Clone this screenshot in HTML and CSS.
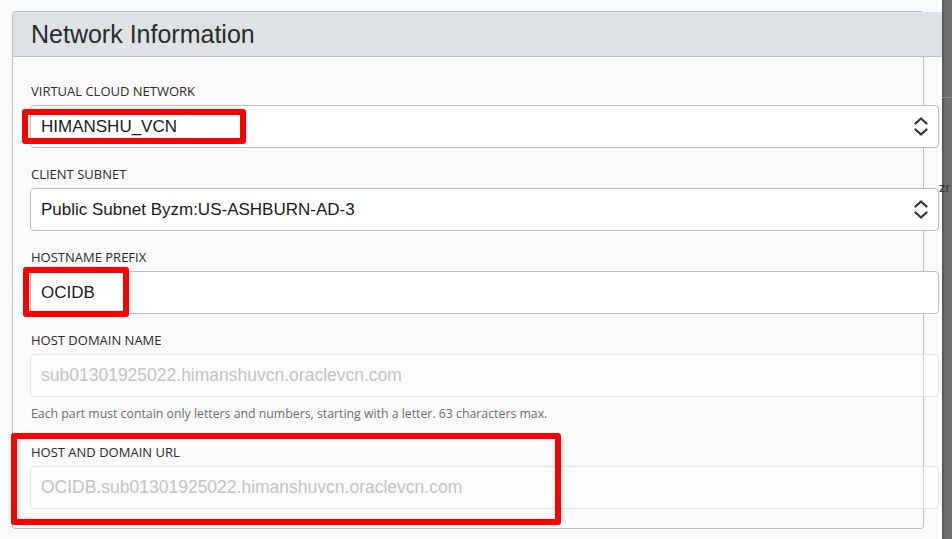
FILE: index.html
```html
<!DOCTYPE html>
<html lang="en">
<head>
<meta charset="utf-8">
<title>Network Information</title>
<link rel="stylesheet" href="styles.css">
</head>
<body>
<div class="page">
  <div class="main">
    <section class="panel">
      <header class="panel-head"><h2 class="panel-title">Network Information</h2></header>
      <div class="panel-body">
        <div class="field">
          <div class="label">VIRTUAL CLOUD NETWORK</div>
          <div class="control">
            <span class="value">HIMANSHU_VCN</span>
            <svg class="chev" width="16" height="22" viewBox="0 0 16 22"><path d="M2.5 7.5 L8 2.5 L13.5 7.5 M2.5 13.5 L8 18.5 L13.5 13.5" fill="none" stroke="#333" stroke-width="2.2" stroke-linecap="round" stroke-linejoin="round"/></svg>
          </div>
        </div>
        <div class="field">
          <div class="label">CLIENT SUBNET</div>
          <div class="control">
            <span class="value">Public Subnet Byzm:US-ASHBURN-AD-3</span>
            <svg class="chev" width="16" height="22" viewBox="0 0 16 22"><path d="M2.5 7.5 L8 2.5 L13.5 7.5 M2.5 13.5 L8 18.5 L13.5 13.5" fill="none" stroke="#333" stroke-width="2.2" stroke-linecap="round" stroke-linejoin="round"/></svg>
          </div>
        </div>
        <div class="field">
          <div class="label">HOSTNAME PREFIX</div>
          <div class="control"><span class="value">OCIDB</span></div>
        </div>
        <div class="field field-help">
          <div class="label">HOST DOMAIN NAME</div>
          <div class="control disabled"><span class="value">sub01301925022.himanshuvcn.oraclevcn.com</span></div>
          <div class="help">Each part must contain only letters and numbers, starting with a letter. 63 characters max.</div>
        </div>
        <div class="field field-last">
          <div class="label">HOST AND DOMAIN URL</div>
          <div class="control disabled"><span class="value">OCIDB.sub01301925022.himanshuvcn.oraclevcn.com</span></div>
        </div>
      </div>
    </section>
  </div>
  <div class="edge"><span class="edge-top"></span><span class="edge-text">zr</span></div>

  <div class="mark mark-1"></div>
  <div class="mark mark-2"></div>
  <div class="mark mark-3"></div>
</div>
</body>
</html>
```

FILE: styles.css
```css
* { box-sizing: border-box; }
html, body { margin: 0; padding: 0; }
body {
  background: #fafafa;
  font-family: "Liberation Sans", Arial, sans-serif;
  color: #333;
  overflow: hidden;
}
.page {
  position: relative;
  display: flex;
  width: 952px;
  height: 539px;
}
.main {
  width: 942px;
  padding: 11px 0 0 12px;
}
.panel {
  width: 912px;
  height: 518px;
  border: 1px solid #b9bdc5;
  border-radius: 3px;
  background: #fafafa;
}
.panel-head {
  height: 45px;
  margin-right: -19px;
  background: #dfe2e5;
  border-bottom: 1px solid #b9bdc5;
  padding-left: 18px;
}
.panel-title {
  margin: 0;
  font-family: "Liberation Sans", Arial, sans-serif;
  font-weight: normal;
  font-size: 25px;
  line-height: 44px;
  color: #2a2a2a;
}
.panel-body {
  padding: 26px 0 0 17px;
}
.field { margin-bottom: 18px; }
.field-help { margin-bottom: 22px; }
.field-last { margin-bottom: 0; }
.label {
  font-family: "Open Sans", sans-serif;
  font-size: 13px;
  line-height: 16px;
  color: #2b2b2b;
  padding-left: 1px;
  margin-bottom: 6px;
}
.control {
  display: flex;
  align-items: center;
  justify-content: space-between;
  height: 43px;
  margin-right: -16px;
  padding: 0 9px 0 10px;
  background: #fff;
  border: 1px solid #b9bdc5;
  border-radius: 4px;
}
.value {
  font-family: "Liberation Sans", Arial, sans-serif;
  font-size: 17px;
  color: #1a1a1a;
}
.chev { display: block; margin-top: 1px; }
.control.disabled {
  background: rgba(255, 255, 255, 0.45);
  border-color: #e4e4ea;
}
.control.disabled .value { color: #c3c3c3; font-size: 17.5px; }
.help {
  margin-top: 9px;
  font-family: "Open Sans", sans-serif;
  font-size: 12.3px;
  line-height: 16px;
  color: #6e6e6e;
  padding-left: 1px;
}
.edge {
  position: relative;
  width: 10px;
  height: 539px;
  background: linear-gradient(to right, #4e4e4e 0, #6d6d6d 3px, #6f6f6f 100%);
}
.edge-top {
  display: block;
  height: 98px;
  border-bottom: 1px solid #8c8c8c;
}
.edge-text {
  position: absolute;
  left: -3px;
  top: 180px;
  font-family: "Liberation Sans", Arial, sans-serif;
  font-size: 13px;
  color: #333;
}
.mark {
  position: absolute;
  border: 6px solid #ff0000;
  border-radius: 3px;
}
.mark-1 { left: 22px; top: 109px; width: 224px; height: 35px; }
.mark-2 { left: 23px; top: 267px; width: 106px; height: 50px; }
.mark-3 { left: 11px; top: 433px; width: 550px; height: 92px; }
```
